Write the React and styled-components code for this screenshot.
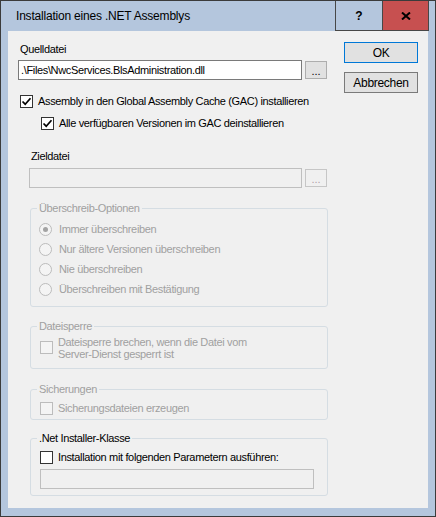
import React from "react";
import styled, { createGlobalStyle } from "styled-components";

const Global = createGlobalStyle`
  html, body { margin: 0; padding: 0; background: #ffffff; }
  body { font-family: "Liberation Sans", Arial, sans-serif; }
  * { box-sizing: border-box; }
`;

const Window = styled.div`
  width: 436px;
  height: 517px;
  border: 1px solid #3b3b3b;
  background: #b4c6dd;
  display: flex;
  flex-direction: column;
`;

const TitleBar = styled.div`
  height: 30px;
  display: flex;
  align-items: center;
  padding: 0 6px 0 15px;
  flex: 0 0 auto;
`;

const Title = styled.div`
  flex: 1;
  font-size: 12px;
  letter-spacing: -0.2px;
  color: #000;
`;

const CaptionButton = styled.div`
  width: 47px;
  height: 30px;
  display: flex;
  align-items: center;
  justify-content: center;
  border-left: 1px solid #474747;
  border-bottom: 1px solid #474747;
  border-right: ${(p) => (p.$close ? "1px solid #474747" : "none")};
  background: ${(p) => (p.$close ? "#c75050" : "transparent")};
  font-weight: bold;
  font-size: 12px;
  color: #000;
`;

const Client = styled.div`
  flex: 1;
  margin: 0 7px 8px 7px;
  background: #f0f0f0;
  display: flex;
  font-size: 11px;
  letter-spacing: -0.35px;
  color: #000;
`;

const LeftCol = styled.div`
  width: 336px;
  display: flex;
  flex-direction: column;
  align-items: flex-start;
`;

const RightCol = styled.div`
  display: flex;
  flex-direction: column;
  gap: 9px;
  padding-top: 11px;
`;

const PushButton = styled.div`
  width: 74px;
  height: 21px;
  display: flex;
  align-items: center;
  justify-content: center;
  background: #e1e1e1;
  border: 1px solid ${(p) => (p.$default ? "#0078d7" : "#7a7a7a")};
  font-size: 12px;
  letter-spacing: -0.3px;
`;

const Label = styled.div`
  line-height: 14px;
  margin: ${(p) => p.$m};
  color: ${(p) => (p.$disabled ? "#a0a0a0" : "#000")};
`;

const FieldRow = styled.div`
  display: flex;
  align-items: center;
  gap: 3px;
  margin: ${(p) => p.$m};
`;

const TextField = styled.div`
  width: ${(p) => p.$w}px;
  height: 20px;
  border: 1px solid ${(p) => (p.$disabled ? "#bfbfbf" : "#7a7a7a")};
  background: ${(p) => (p.$disabled ? "#f0f0f0" : "#ffffff")};
  padding: 0 2px;
  display: flex;
  align-items: center;
  line-height: 14px;
  white-space: nowrap;
  overflow: hidden;
  margin: ${(p) => p.$m || "0"};
`;

const Browse = styled.div`
  width: 22px;
  height: 18px;
  border: 1px solid ${(p) => (p.$disabled ? "#c6c6c6" : "#adadad")};
  background: ${(p) => (p.$disabled ? "#f0f0f0" : "#e1e1e1")};
  color: ${(p) => (p.$disabled ? "#b0a0a8" : "#000")};
  display: flex;
  align-items: center;
  justify-content: center;
  font-size: 11px;
  letter-spacing: 0;
  padding-top: 2px;
`;

const CheckRow = styled.div`
  display: flex;
  align-items: ${(p) => (p.$top ? "flex-start" : "center")};
  gap: 5px;
  min-height: 14px;
  margin: ${(p) => p.$m || "0"};
  color: ${(p) => (p.$disabled ? "#a0a0a0" : "#000")};
`;

const Box = styled.span`
  flex: 0 0 13px;
  width: 13px;
  height: 13px;
  border: 1px solid ${(p) => (p.$disabled ? "#bcbcbc" : "#333333")};
  background: ${(p) => (p.$disabled ? "#f4f4f4" : "#ffffff")};
  display: flex;
  align-items: center;
  justify-content: center;
  margin-top: ${(p) => p.$mt || 0}px;
`;

const RadioRow = styled.div`
  display: flex;
  align-items: center;
  gap: 7px;
  height: 20px;
  color: #a0a0a0;
`;

const RadioDot = styled.span`
  width: 13px;
  height: 13px;
  border-radius: 50%;
  border: 1px solid #bcbcbc;
  background: #f4f4f4;
  display: flex;
  align-items: center;
  justify-content: center;
  &::after {
    content: "";
    width: 5px;
    height: 5px;
    border-radius: 50%;
    background: ${(p) => (p.$checked ? "#a3a3a3" : "transparent")};
  }
`;

const Group = styled.fieldset`
  margin: ${(p) => p.$m};
  width: 298px;
  border: 1px solid #d5dde3;
  border-radius: 3px;
  padding: ${(p) => p.$pad};
  min-width: 0;
`;

const GroupBody = styled.div`
  display: flex;
  flex-direction: column;
  align-items: flex-start;
  padding-left: ${(p) => p.$indent}px;
`;

const Legend = styled.legend`
  margin-left: 6px;
  padding: 0 2px;
  line-height: 14px;
  color: ${(p) => (p.$disabled ? "#a0a0a0" : "#000")};
`;

const MultiLine = styled.span`
  line-height: 12px;
`;

const Tick = () => (
  <svg width="11" height="11" viewBox="0 0 11 11">
    <path d="M1.5 5.5 L4.2 8.2 L9.5 2.2" fill="none" stroke="#000" strokeWidth="1.7" />
  </svg>
);

const CloseGlyph = () => (
  <svg width="10" height="8" viewBox="0 0 10 8">
    <path d="M1 0.5 L9 7.5 M9 0.5 L1 7.5" stroke="#000" strokeWidth="2" />
  </svg>
);

function CheckBox({ checked, disabled, mt }) {
  return (
    <Box $disabled={disabled} $mt={mt}>
      {checked ? <Tick /> : null}
    </Box>
  );
}

const overwriteOptions = [
  { label: "Immer überschreiben", checked: true },
  { label: "Nur ältere Versionen überschreiben" },
  { label: "Nie überschreiben" },
  { label: "Überschreiben mit Bestätigung" },
];

export default function App() {
  return (
    <>
      <Global />
      <Window>
        <TitleBar>
          <Title>Installation eines .NET Assemblys</Title>
          <CaptionButton>?</CaptionButton>
          <CaptionButton $close>
            <CloseGlyph />
          </CaptionButton>
        </TitleBar>
        <Client>
          <LeftCol>
            <Label $m="11px 0 0 12px">Quelldatei</Label>
            <FieldRow $m="4px 0 0 10px">
              <TextField $w={284}>{".\\Files\\NwcServices.BlsAdministration.dll"}</TextField>
              <Browse>...</Browse>
            </FieldRow>
            <CheckRow $m="14px 0 0 12px">
              <CheckBox checked />
              <span>Assembly in den Global Assembly Cache (GAC) installieren</span>
            </CheckRow>
            <CheckRow $m="8px 0 0 33px">
              <CheckBox checked />
              <span>Alle verfügbaren Versionen im GAC deinstallieren</span>
            </CheckRow>
            <Label $m="19px 0 0 23px">Zieldatei</Label>
            <FieldRow $m="5px 0 0 21px">
              <TextField $w={273} $disabled />
              <Browse $disabled>...</Browse>
            </FieldRow>

            <Group $m="13px 0 0 22px" $pad="4px 0 7px 0">
              <Legend $disabled>Überschreib-Optionen</Legend>
              <GroupBody $indent={8}>
                {overwriteOptions.map((o) => (
                  <RadioRow key={o.label}>
                    <RadioDot $checked={o.checked} />
                    <span>{o.label}</span>
                  </RadioRow>
                ))}
              </GroupBody>
            </Group>

            <Group $m="12px 0 0 22px" $pad="3px 0 8px 0">
              <Legend $disabled>Dateisperre</Legend>
              <GroupBody $indent={9}>
                <CheckRow $top $disabled>
                  <CheckBox disabled mt={5} />
                  <MultiLine>
                    Dateisperre brechen, wenn die Datei vom
                    <br />
                    Server-Dienst gesperrt ist
                  </MultiLine>
                </CheckRow>
              </GroupBody>
            </Group>

            <Group $m="13px 0 0 22px" $pad="5px 0 4px 0">
              <Legend $disabled>Sicherungen</Legend>
              <GroupBody $indent={9}>
                <CheckRow $disabled>
                  <CheckBox disabled />
                  <span>Sicherungsdateien erzeugen</span>
                </CheckRow>
              </GroupBody>
            </Group>

            <Group $m="11px 0 0 22px" $pad="5px 0 6px 0">
              <Legend>.Net Installer-Klasse</Legend>
              <GroupBody $indent={9}>
                <CheckRow>
                  <CheckBox />
                  <span>Installation mit folgenden Parametern ausführen:</span>
                </CheckRow>
                <TextField $w={274} $disabled $m="5px 0 0 0" />
              </GroupBody>
            </Group>
          </LeftCol>
          <RightCol>
            <PushButton $default>OK</PushButton>
            <PushButton>Abbrechen</PushButton>
          </RightCol>
        </Client>
      </Window>
    </>
  );
}
